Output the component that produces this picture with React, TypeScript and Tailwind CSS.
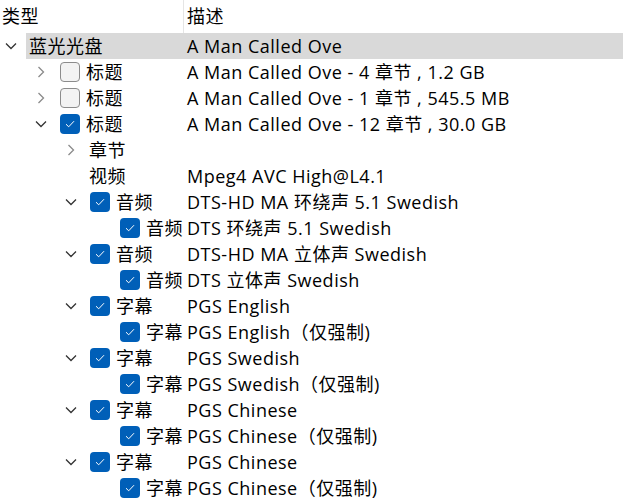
import React from "react";

type Row = {
  level: number;
  chevron?: "down" | "right";
  check?: "on" | "off";
  label: string;
  desc: string;
  hl?: boolean;
};

const rows: Row[] = [
  { level: 0, chevron: "down", label: "蓝光光盘", desc: "A Man Called Ove", hl: true },
  { level: 1, chevron: "right", check: "off", label: "标题", desc: "A Man Called Ove - 4 章节 , 1.2 GB" },
  { level: 1, chevron: "right", check: "off", label: "标题", desc: "A Man Called Ove - 1 章节 , 545.5 MB" },
  { level: 1, chevron: "down", check: "on", label: "标题", desc: "A Man Called Ove - 12 章节 , 30.0 GB" },
  { level: 2, chevron: "right", label: "章节", desc: "" },
  { level: 2, label: "视频", desc: "Mpeg4 AVC High@L4.1" },
  { level: 2, chevron: "down", check: "on", label: "音频", desc: "DTS-HD MA 环绕声 5.1 Swedish" },
  { level: 3, check: "on", label: "音频", desc: "DTS 环绕声 5.1 Swedish" },
  { level: 2, chevron: "down", check: "on", label: "音频", desc: "DTS-HD MA 立体声 Swedish" },
  { level: 3, check: "on", label: "音频", desc: "DTS 立体声 Swedish" },
  { level: 2, chevron: "down", check: "on", label: "字幕", desc: "PGS English" },
  { level: 3, check: "on", label: "字幕", desc: "PGS English（仅强制)" },
  { level: 2, chevron: "down", check: "on", label: "字幕", desc: "PGS Swedish" },
  { level: 3, check: "on", label: "字幕", desc: "PGS Swedish（仅强制)" },
  { level: 2, chevron: "down", check: "on", label: "字幕", desc: "PGS Chinese" },
  { level: 3, check: "on", label: "字幕", desc: "PGS Chinese（仅强制)" },
  { level: 2, chevron: "down", check: "on", label: "字幕", desc: "PGS Chinese" },
  { level: 3, check: "on", label: "字幕", desc: "PGS Chinese（仅强制)" },
];

const FONT = { fontFamily: "'Open Sans', 'Noto Sans CJK SC', sans-serif" };

function Chevron({ dir }: { dir: "down" | "right" }) {
  if (dir === "down") {
    return (
      <svg width="12" height="8" viewBox="0 0 12 8" className="text-[#333333]">
        <path d="M1 1.5 L6 6.5 L11 1.5" fill="none" stroke="currentColor" strokeWidth="1.3" />
      </svg>
    );
  }
  return (
    <svg width="8" height="12" viewBox="0 0 8 12" className="text-[#8a8a8a]">
      <path d="M1.5 1 L6.5 6 L1.5 11" fill="none" stroke="currentColor" strokeWidth="1.3" />
    </svg>
  );
}

function Check({ on }: { on: boolean }) {
  if (on) {
    return (
      <div className="w-[20px] h-[20px] rounded-[4px] bg-[#005fb8] flex items-center justify-center shrink-0">
        <svg width="10" height="8" viewBox="0 0 10 8">
          <path d="M1 4.2 L3.7 6.8 L9 1.2" fill="none" stroke="white" strokeWidth="1" />
        </svg>
      </div>
    );
  }
  return <div className="w-[20px] h-[20px] rounded-[4px] bg-[#f3f3f3] border border-[#8c8c8c] shrink-0" />;
}

export default function App() {
  return (
    <div
      className="w-[623px] h-[503px] bg-white overflow-hidden text-black text-[18px] tracking-[0.5px]"
      style={FONT}
    >
      <div className="flex h-[33px] items-center">
        <div className="w-[183px] pl-[2px] h-full flex items-center">类型</div>
        <div className="w-px h-[33px] bg-[#e5e5e5]" />
        <div className="pl-[3px] flex items-center">描述</div>
      </div>
      {rows.map((r, i) => (
        <div key={i} className="relative flex h-[26px] items-center">
          {r.hl && <div className="absolute left-[26px] right-0 top-0 bottom-0 bg-[#d9d9d9]" />}
          <div className="relative w-[187px] flex items-center shrink-0 whitespace-nowrap">
            <div style={{ width: r.level * 30 }} className="shrink-0" />
            <div className="w-[22px] flex justify-center items-center shrink-0">
              {r.chevron && <Chevron dir={r.chevron} />}
            </div>
            {r.check ? (
              <div className="flex items-center">
                <div className="ml-[8px]">
                  <Check on={r.check === "on"} />
                </div>
                <span className="ml-[6px]">{r.label}</span>
              </div>
            ) : (
              <span className="ml-[7px]">{r.label}</span>
            )}
          </div>
          <div className="relative whitespace-nowrap">{r.desc}</div>
        </div>
      ))}
    </div>
  );
}
